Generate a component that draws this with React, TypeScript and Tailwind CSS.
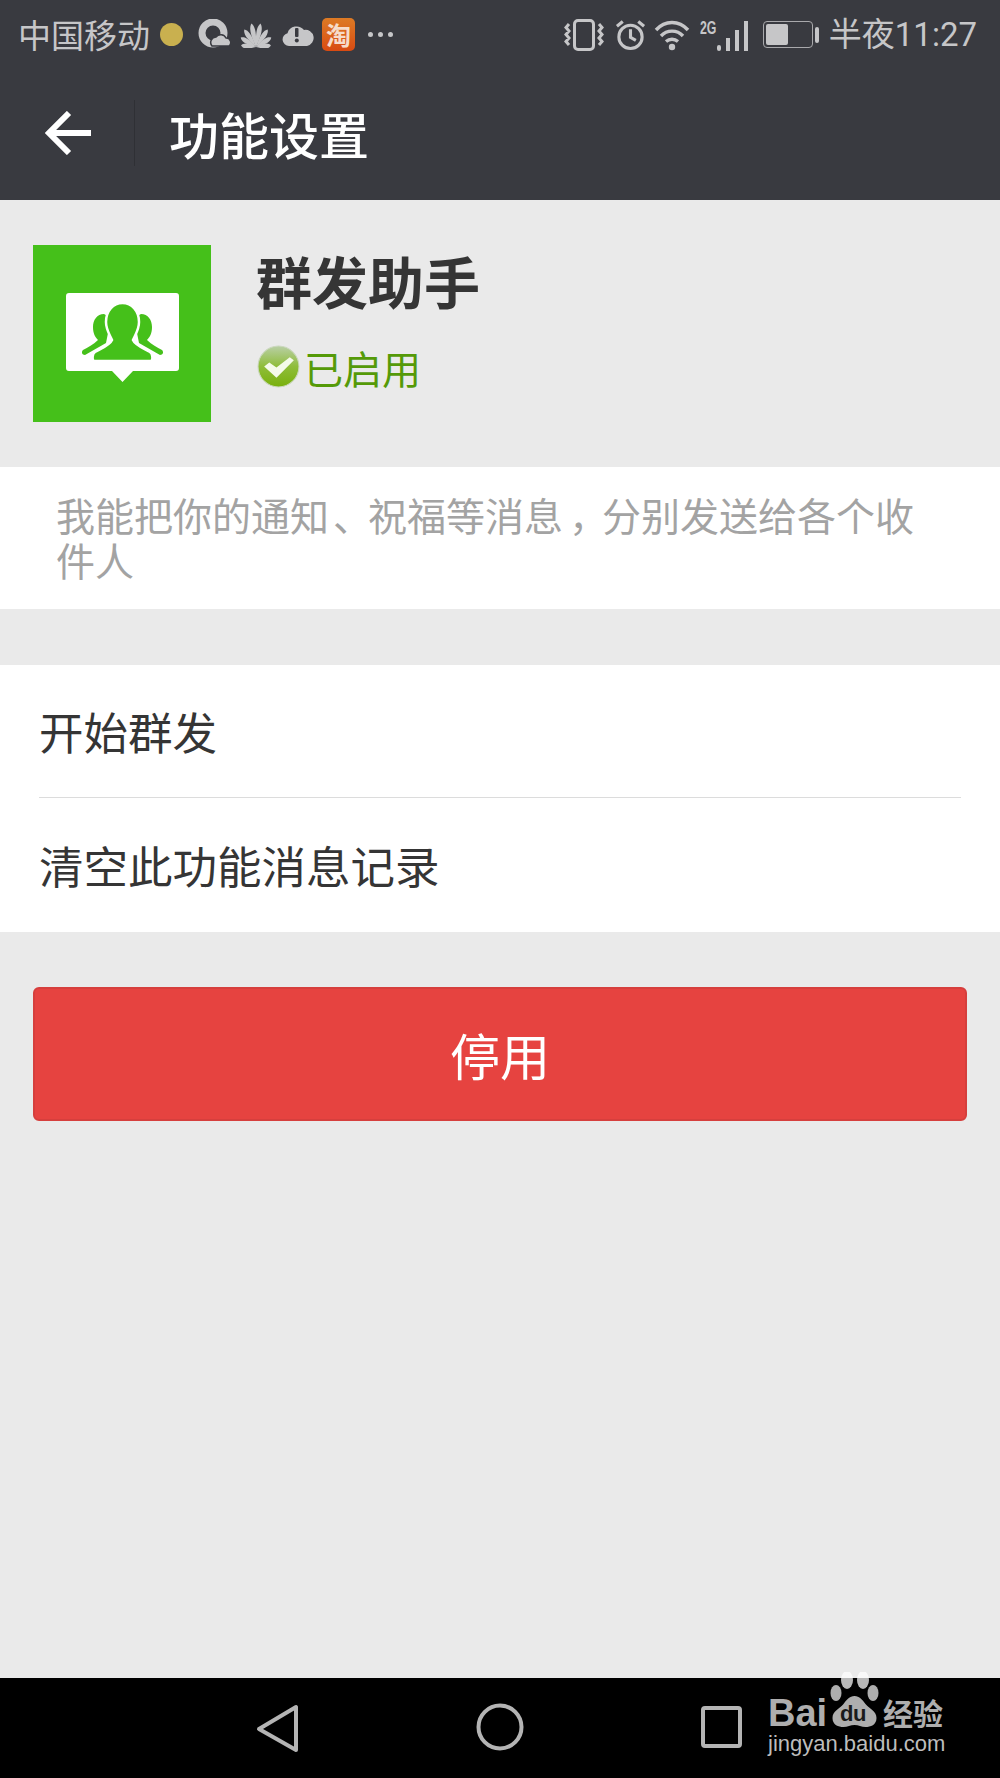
const cjk = { fontFamily: '"Noto Sans CJK SC", "Noto Sans", sans-serif' }
const latin = { fontFamily: '"Liberation Sans", sans-serif' }

const petals = [
  { angle: -84, len: 15 },
  { angle: -58, len: 18 },
  { angle: -34, len: 21 },
  { angle: -11, len: 24 },
  { angle: 11, len: 24 },
  { angle: 34, len: 21 },
  { angle: 58, len: 18 },
  { angle: 84, len: 15 }
]

const StatusLeftIcons = () => (
  <div className="flex items-center">
    <div className="ml-[10px] h-[23px] w-[23px] rounded-full bg-[#c9b04f]" />
    <svg className="ml-[15px]" width="32" height="32" viewBox="0 0 32 32">
      <circle cx="15" cy="14" r="11" fill="none" stroke="#c6c6c8" strokeWidth="7" />
      <path d="M14 27a5.500 5.500 0 0 1 4-9 6 6 0 0 1 10 1 4.500 4.500 0 0 1 3 8z" fill="#c6c6c8" stroke="#393a40" strokeWidth="1.500" />
    </svg>
    <svg className="ml-[10px]" width="32" height="26" viewBox="0 0 32 26" fill="#c6c6c8">
      {petals.map(p => (
        <path
          key={p.angle}
          d={`M16 25C12.500 ${25 - p.len * 0.6} 13 ${25 - p.len * 0.85} 16 ${25 - p.len}C19 ${25 - p.len * 0.85} 19.500 ${25 - p.len * 0.6} 16 25z`}
          transform={`rotate(${p.angle} 16 25)`}
        />
      ))}
    </svg>
    <svg className="ml-[10px]" width="32" height="24" viewBox="0 0 32 24">
      <path d="M7 23a6.500 6.500 0 0 1-1.500-12.800A9.500 9.500 0 0 1 22 7a7 7 0 0 1 3 16z" fill="#c6c6c8" />
      <rect x="13" y="5" width="3.500" height="9" rx="1" fill="#393a40" />
      <circle cx="14.800" cy="17.500" r="2" fill="#393a40" />
    </svg>
    <div className="ml-[8px] flex h-[33px] w-[33px] items-center justify-center rounded-[5px] bg-gradient-to-b from-[#dd7a25] to-[#d84a12] text-[25px] font-bold leading-none text-[#f6dccb]" style={cjk}>
      淘
    </div>
    <div className="ml-[13px] flex items-center gap-[5px]">
      <div className="h-[5px] w-[5px] rounded-full bg-[#c6c6c8]" />
      <div className="h-[5px] w-[5px] rounded-full bg-[#c6c6c8]" />
      <div className="h-[5px] w-[5px] rounded-full bg-[#c6c6c8]" />
    </div>
  </div>
)

const StatusRightIcons = () => (
  <div className="flex items-center">
    <svg width="40" height="32" viewBox="0 0 40 32" fill="none" stroke="#c6c6c8">
      <rect x="10.500" y="1.500" width="19" height="29" rx="3.500" strokeWidth="3" />
      <path d="M5 5 2 8.500 5 12l-3 3.500L5 19l-3 3.500L5 26M35 5l3 3.500-3 3.500 3 3.500-3 3.500 3 3.500-3 3.500" strokeWidth="3" />
    </svg>
    <svg className="ml-[11px]" width="31" height="32" viewBox="0 0 32 32" fill="none" stroke="#c6c6c8" strokeWidth="3.200">
      <circle cx="16" cy="18" r="12" />
      <path d="M16 10v8.500l5.500 3M2 7l6-5M30 7l-6-5" />
    </svg>
    <svg className="ml-[8px]" width="36" height="32" viewBox="0 0 36 32" fill="none" stroke="#c6c6c8" strokeWidth="3.400">
      <path d="M2 11C11 1 25 1 34 11M7 17c6-6.500 16-6.500 22 0M12 22.500c3.500-3 8.500-3 12 0" />
      <circle cx="18" cy="28" r="3.200" fill="#c6c6c8" stroke="none" />
    </svg>
    <div className="relative ml-[10px] h-[32px] w-[48px]">
      <span className="absolute left-0 top-[-1px] origin-left scale-x-[0.65] text-[19px] font-bold leading-none text-[#c6c6c8]" style={latin}>
        2G
      </span>
      <div className="absolute bottom-0 right-0 flex items-end gap-[5px]">
        <div className="h-[6px] w-[4px] rounded-full bg-[#c6c6c8]" />
        <div className="h-[13px] w-[4px] bg-[#c6c6c8]" />
        <div className="h-[21px] w-[4px] bg-[#c6c6c8]" />
        <div className="h-[30px] w-[4px] bg-[#c6c6c8]" />
      </div>
    </div>
    <div className="ml-[15px] flex items-center">
      <div className="flex h-[27px] w-[50px] items-center rounded-[4px] border-[1.500px] border-[#a9a9ac] p-[2px]">
        <div className="h-full w-[22px] rounded-[2px] bg-[#c6c6c8]" />
      </div>
      <div className="ml-[2px] h-[16px] w-[4px] rounded-full bg-[#c6c6c8]" />
    </div>
  </div>
)

const GroupIcon = () => (
  <svg width="113" height="89" viewBox="0 0 113 89">
    <path d="M3 0h107a3 3 0 0 1 3 3v72a3 3 0 0 1-3 3H67L56.500 89 46 78H3a3 3 0 0 1-3-3V3a3 3 0 0 1 3-3z" fill="#fff" />
    <path d="M38 21C31 21 27 27 27 34c0 6 2 10 5 13-5 5-10 7-15 10-2 2-1 5 2 5l21-12 5-25z" fill="#45c01a" />
    <path d="M75 21c7 0 11 6 11 13 0 6-2 10-5 13 5 5 10 7 15 10 2 2 1 5-2 5L73 50l-5-25z" fill="#45c01a" />
    <path d="M56.500 10C66 10 73 18 73 29c0 8-4 13-6 18 2 5 10 8 17 12 3 2 3 8 1 9H28c-2-1-2-7 1-9 7-4 15-7 17-12-2-5-6-10-6-18 0-11 7-19 16.500-19z" fill="#45c01a" stroke="#fff" strokeWidth="2.500" />
  </svg>
)

const CheckBadge = () => (
  <svg className="ml-[1px]" width="43" height="43" viewBox="0 0 42 42">
    <defs>
      <linearGradient id="badge" x1="0" y1="0" x2="0" y2="1">
        <stop offset="0" stopColor="#b9cfa6" />
        <stop offset="0.5" stopColor="#8fbd3a" />
        <stop offset="1" stopColor="#78b00c" />
      </linearGradient>
    </defs>
    <circle cx="21" cy="21" r="20" fill="url(#badge)" stroke="#cbd8bd" strokeWidth="1" />
    <path d="M7 21l5-4 7 5 13-10 4 3-17 17z" fill="#f5faea" />
  </svg>
)

const BaiduMark = () => (
  <div className="absolute left-[768px] top-[20px] h-[58px] w-[178px] text-[#aeaeae]">
    <span className="absolute left-0 top-[-4px] text-[38px] font-bold leading-[38px]" style={latin}>
      Bai
    </span>
    <svg className="absolute left-[60px] top-[-26px]" width="54" height="58" viewBox="0 0 54 58">
      <ellipse cx="19" cy="8" rx="6" ry="9" fill="#fff" fillOpacity="0.72" />
      <ellipse cx="35" cy="8" rx="6" ry="9" fill="#fff" fillOpacity="0.72" />
      <ellipse cx="8" cy="21" rx="5.500" ry="8" fill="#aeaeae" />
      <ellipse cx="45" cy="21" rx="5.500" ry="8" fill="#aeaeae" />
      <path d="M26.500 24c5 0 8 4 11 8 4 5 11 7 11 14 0 7-6 9-11 9-4 0-7-2-11-2s-7 2-11 2c-5 0-11-2-11-9 0-7 7-9 11-14 3-4 6-8 11-8z" fill="#aeaeae" />
    </svg>
    <span className="absolute left-[72px] top-[5px] text-[22px] font-bold leading-none tracking-[-0.5px] text-[#1b1b1b]" style={latin}>
      du
    </span>
    <span className="absolute left-[115px] top-[-5px] whitespace-nowrap text-[30px] font-bold leading-[38px]" style={cjk}>
      经验
    </span>
    <span className="absolute left-0 top-[34px] whitespace-nowrap text-[22px] leading-[24px] text-[#bdbdbd]" style={latin}>
      jingyan.baidu.com
    </span>
  </div>
)

export default function App() {
  return (
    <div className="flex h-[1778px] w-[1000px] flex-col overflow-hidden bg-[#eaeaea]" style={cjk}>
      <div className="h-[200px] shrink-0 bg-[#393a40]">
        <div className="flex h-[68px] items-center justify-between pl-[18px] pr-[23px] pt-[1px]">
          <div className="flex items-center">
            <span className="text-[33px] leading-none text-[#c6c6c8]">中国移动</span>
            <StatusLeftIcons />
          </div>
          <div className="flex items-center">
            <StatusRightIcons />
            <span className="ml-[10px] text-[33px] leading-none text-[#c6c6c8]" style={{ fontFamily: 'Roboto, "Noto Sans CJK SC", sans-serif' }}>
              半夜11:27
            </span>
          </div>
        </div>
        <div className="flex h-[132px] items-center pb-[2px]">
          <svg className="ml-[45px]" width="46" height="44" viewBox="0 0 46 44" fill="none" stroke="#fff" strokeWidth="6">
            <path d="M46 22H5M24 2 4 22l20 20" />
          </svg>
          <div className="ml-[43px] h-[66px] w-px bg-[#2f3035]" />
          <span className="ml-[34px] text-[50px] font-medium leading-none text-white">功能设置</span>
        </div>
      </div>

      <div className="flex h-[267px] shrink-0 items-start px-[33px] pt-[45px]">
        <div className="flex h-[177px] w-[178px] items-center justify-center bg-[#45c01a] pt-[8px]">
          <GroupIcon />
        </div>
        <div className="ml-[45px] flex flex-col">
          <span className="text-[56px] font-bold leading-[70px] text-[#353535]">群发助手</span>
          <div className="mt-[30px] flex items-center">
            <CheckBadge />
            <span className="ml-[4px] pt-[1px] text-[39px] leading-[42px] text-[#559a08]">已启用</span>
          </div>
        </div>
      </div>

      <div className="h-[142px] shrink-0 bg-white pl-[56px] pr-[60px] pt-[25px] text-[39px] leading-[45px] text-[#a3a3a3]">
        <div className="whitespace-nowrap">
          我能把你的通知<span className="pl-[4px] tracking-[-4px]">、</span>祝福等消息<span className="pl-[6px] tracking-[-6px]">，</span>分别发送给各个收
        </div>
        <div>件人</div>
      </div>

      <div className="mt-[56px] shrink-0 bg-white pl-[39px] pr-[39px] text-[44.500px] text-[#353535]">
        <div className="flex h-[133px] items-center border-b border-[#dcdcdc]">开始群发</div>
        <div className="flex h-[134px] items-center">清空此功能消息记录</div>
      </div>

      <div className="mx-[33px] mt-[55px] flex h-[134px] shrink-0 items-center justify-center rounded-[6px] border-2 border-[#d63f3d] bg-[#e64340] text-[50px] text-white">
        停用
      </div>

      <div className="relative mt-auto flex h-[100px] shrink-0 items-center bg-black">
        <svg className="absolute left-[256px] top-[26px]" width="44" height="50" viewBox="0 0 44 50" fill="none" stroke="#b4b4b4" strokeWidth="4" strokeLinejoin="round">
          <path d="M40 3v43L3 25z" />
        </svg>
        <svg className="absolute left-[476px] top-[24px]" width="48" height="50" viewBox="0 0 48 50" fill="none" stroke="#b4b4b4" strokeWidth="4">
          <ellipse cx="24" cy="25" rx="21.500" ry="21.500" />
        </svg>
        <div className="absolute left-[701px] top-[28px] h-[42px] w-[41px] rounded-[4px] border-[4px] border-[#b4b4b4]" />
        <BaiduMark />
      </div>
    </div>
  )
}
